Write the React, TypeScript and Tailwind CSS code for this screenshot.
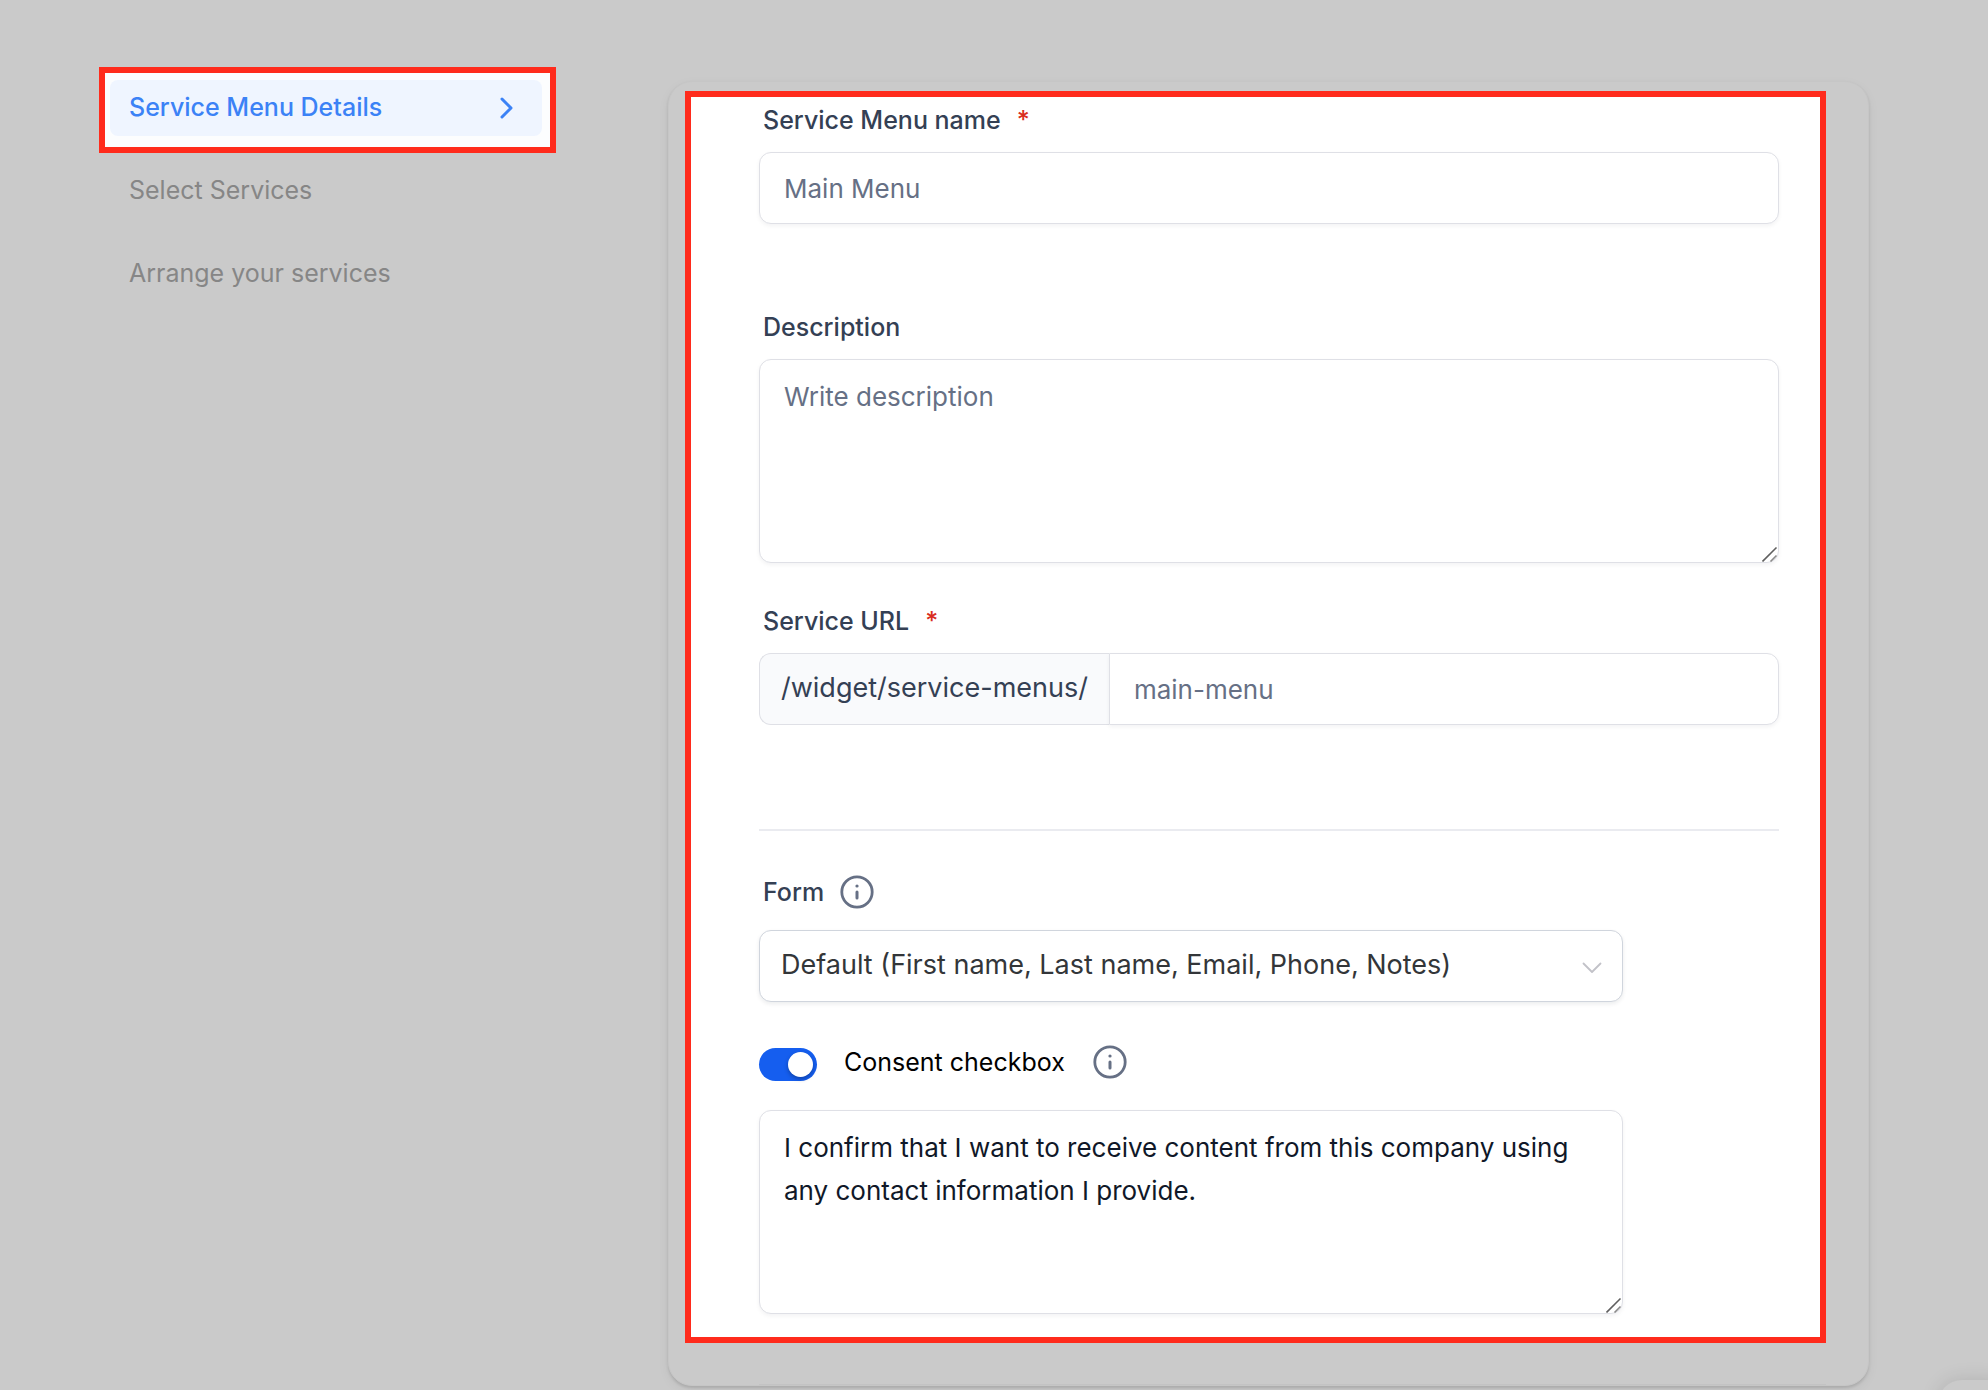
import React from "react";

const fieldBase =
  "block w-full rounded-xl border border-[#dfe0e6] bg-white px-6 text-[26px] text-[#101828] placeholder:text-[#667085] placeholder:opacity-100 shadow-[0_2px_4px_rgba(16,24,40,0.05)] outline-none";

function InfoIcon() {
  return (
    <svg viewBox="0 0 34 34" className="size-[34px] shrink-0" fill="none" stroke="#667085" strokeLinecap="round" aria-hidden="true">
      <circle cx="17" cy="17" r="15.2" strokeWidth="2.8" />
      <path d="M17 17v6" strokeWidth="3" />
      <path d="M17 11h.01" strokeWidth="3.2" />
    </svg>
  );
}

function Label({ htmlFor, required, children }: { htmlFor: string; required?: boolean; children: React.ReactNode }) {
  return (
    <label htmlFor={htmlFor} className="flex h-8 items-center gap-4 pl-1 text-[25px] leading-8 font-medium text-[#344054]">
      {children}
      {required && <span className="text-[#d92d20]">*</span>}
    </label>
  );
}

function TextArea(props: React.TextareaHTMLAttributes<HTMLTextAreaElement>) {
  return (
    <div className="relative">
      <textarea {...props} className={`${fieldBase} h-[204px] resize-none py-[15px] leading-[43px]`} />
      <svg viewBox="0 0 16 16" className="pointer-events-none absolute right-px bottom-px size-4" fill="none" strokeWidth="1.6" aria-hidden="true">
        <path d="M0.5 15.5L14.5 1.5" stroke="#5f5f5f" />
        <path d="M8.5 15.5l6-6" stroke="#8a8a8a" />
      </svg>
    </div>
  );
}

function Nav() {
  return (
    <nav className="w-[457px] shrink-0 text-[25px] leading-8">
      <div className="border-6 border-[#ff2b1c] bg-[#fcfdfe] pt-[7px] pr-2 pb-[11px] pl-[5px]">
        <a href="#details" className="flex h-14 items-center justify-between rounded-lg bg-[#eff5ff] pr-7 pb-0.5 pl-[19px] font-medium text-[#3b82f6]">
          Service Menu Details
          <svg viewBox="0 0 16 24" className="h-6 w-4" fill="none" stroke="currentColor" strokeWidth="3" strokeLinecap="round" strokeLinejoin="round" aria-hidden="true">
            <path d="M4 4l9 9-9 9" />
          </svg>
        </a>
      </div>
      <a href="#select" className="mt-[21px] block pl-[30px] text-[#868686]">Select Services</a>
      <a href="#arrange" className="mt-[51px] block pl-[30px] text-[#868686]">Arrange your services</a>
    </nav>
  );
}

export default function App() {
  return (
    <div className="relative flex min-h-screen items-start overflow-hidden bg-[#cacaca] pt-[67px] pr-[119px] pl-[99px] font-['Inter',sans-serif]">
      <Nav />
      <main className="mt-[14px] ml-28 min-w-0 flex-1 rounded-3xl border border-[#c6c6c6] bg-[#cacaca] pt-[9px] pr-[42px] pl-4 shadow-[0_2px_3px_rgba(0,0,0,0.12),0_4px_12px_rgba(0,0,0,0.05)]">
        <form className="border-6 border-[#ff2b1c] bg-white pt-[7px] pr-[41px] pb-[23px] pl-[68px]">
          <Label htmlFor="name" required>Service Menu name</Label>
          <input id="name" type="text" placeholder="Main Menu" className={`${fieldBase} mt-4 h-[72px]`} />

          <div className="mt-[87px]">
            <Label htmlFor="description">Description</Label>
            <div className="mt-4">
              <TextArea id="description" placeholder="Write description" />
            </div>
          </div>

          <div className="mt-[42px]">
            <Label htmlFor="url" required>Service URL</Label>
            <div className="mt-4 flex h-[72px]">
              <span className="flex items-center rounded-l-xl border border-r-0 border-[#dfe0e6] bg-[#f9fafc] px-[21px] pb-0.5 text-[27px] text-[#344054]">/widget/service-menus/</span>
              <input id="url" type="text" placeholder="main-menu" className="min-w-0 flex-1 rounded-r-xl border border-[#dfe0e6] bg-white px-6 text-[26px] shadow-[0_2px_4px_rgba(16,24,40,0.05)] outline-none placeholder:text-[#667085] placeholder:opacity-100" />
            </div>
          </div>

          <hr className="mt-[104px] border-t-2 border-[#eaebf0]" />

          <div className="mt-11 max-w-[864px]">
            <div className="flex items-center gap-4">
              <Label htmlFor="form">Form</Label>
              <InfoIcon />
            </div>
            <div className="relative mt-[21px]">
              <select id="form" className="block h-[72px] w-full appearance-none rounded-xl border border-[#d0d5dd] bg-white px-[21px] pb-0.5 text-[27px] text-[#333639] shadow-[0_2px_4px_rgba(16,24,40,0.08)] outline-none">
                <option>Default (First name, Last name, Email, Phone, Notes)</option>
              </select>
              <svg viewBox="0 0 20 12" className="pointer-events-none absolute top-8 right-[21px] h-3 w-5" fill="none" stroke="#c2c2c8" strokeWidth="1.8" strokeLinecap="round" strokeLinejoin="round" aria-hidden="true">
                <path d="M1.5 1.5l8.5 8.5 8.5-8.5" />
              </svg>
            </div>
            <div className="mt-[43px] flex h-[34px] items-center">
              <input
                id="consent"
                type="checkbox"
                role="switch"
                defaultChecked
                className="mt-1 flex h-[33px] w-[58px] shrink-0 appearance-none items-center justify-end rounded-full bg-[#155eef] px-1 before:size-[25px] before:rounded-full before:bg-white before:shadow-[0_2px_4px_rgba(0,0,0,0.3)]"
              />
              <label htmlFor="consent" className="mr-7 ml-[27px] text-[25px] leading-8 text-black">Consent checkbox</label>
              <InfoIcon />
            </div>
            <div className="mt-[31px]">
              <TextArea
                aria-label="Consent text"
                defaultValue="I confirm that I want to receive content from this company using any contact information I provide."
              />
            </div>
          </div>
        </form>
        <hr className="mt-[41px] ml-[74px] border-t border-[#c3c3c3]" />
      </main>
      <div className="absolute -right-6 -bottom-12 h-[58px] w-[74px] rounded-3xl bg-[#cacaca] shadow-[0_0_20px_rgba(0,0,0,0.12)]" />
    </div>
  );
}
